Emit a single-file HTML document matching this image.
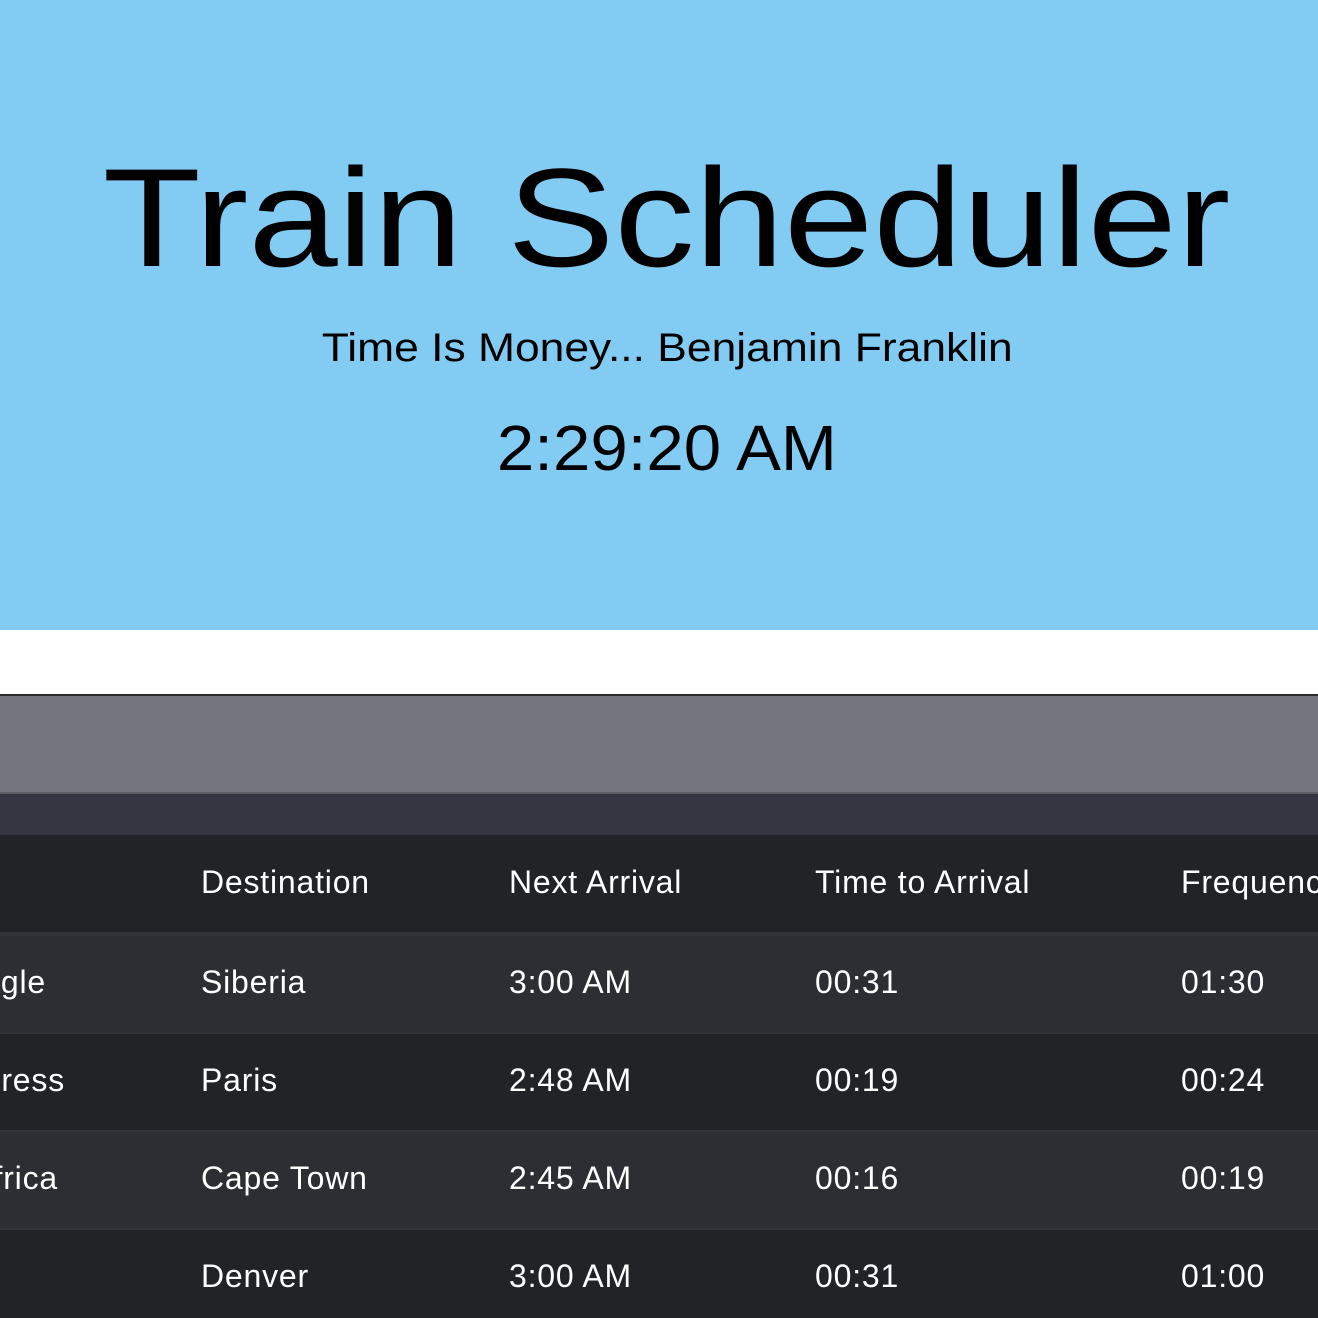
<!DOCTYPE html>
<html><head><style>
body{margin:0;width:1318px;height:1318px;overflow:hidden;background:#fff;font-family:"Liberation Sans","DejaVu Sans",sans-serif;}
.hero{position:absolute;left:0;top:0;width:1318px;height:630px;background:#82cbf2;}
.t{position:absolute;white-space:nowrap;color:#000;}
.title{left:0;width:1334px;top:138px;text-align:center;font-size:140px;line-height:160px;}
.title span{display:inline-block;transform:scaleX(1.147);}
.sub{left:0;width:1334px;top:325px;text-align:center;font-size:40px;line-height:46px;}
.sub span{display:inline-block;transform:scaleX(1.11);}
.clock{left:0;width:1334px;top:412px;text-align:center;font-size:64px;line-height:72px;}
.clock span{display:inline-block;transform:scaleX(1.05);}
.bar{position:absolute;left:0;width:1318px;}
.cell{position:absolute;color:#fff;font-size:32px;white-space:nowrap;letter-spacing:0.8px;}
</style></head><body>
<div class="hero"></div>
<div class="t title"><span>Train Scheduler</span></div>
<div class="t sub"><span>Time Is Money... Benjamin Franklin</span></div>
<div class="t clock"><span>2:29:20 AM</span></div>
<div class="bar" style="top:694px;height:2px;background:#2a2c31"></div>
<div class="bar" style="top:696px;height:96px;background:#74767f"></div>
<div class="bar" style="top:792px;height:2px;background:#5d5f67"></div>
<div class="bar" style="top:794px;height:41px;background:#343741"></div>
<div class="bar" style="top:835px;height:97px;background:#212327"></div>
<div class="bar" style="top:932px;height:4px;background:#32343a"></div>
<div class="bar" style="top:936px;height:96px;background:#2c2e33"></div>
<div class="bar" style="top:1032px;height:2px;background:#32343a"></div>
<div class="bar" style="top:1034px;height:96px;background:#212327"></div>
<div class="bar" style="top:1130px;height:2px;background:#32343a"></div>
<div class="bar" style="top:1132px;height:96px;background:#2c2e33"></div>
<div class="bar" style="top:1228px;height:2px;background:#32343a"></div>
<div class="bar" style="top:1230px;height:88px;background:#212327"></div>

<div class="cell" style="left:201px;top:864px">Destination</div>
<div class="cell" style="left:509px;top:864px">Next Arrival</div>
<div class="cell" style="left:815px;top:864px">Time to Arrival</div>
<div class="cell" style="left:1181px;top:864px">Frequency</div>

<div class="cell" style="right:1272px;top:964px">Beagle</div>
<div class="cell" style="left:201px;top:964px">Siberia</div>
<div class="cell" style="left:509px;top:964px">3:00 AM</div>
<div class="cell" style="left:815px;top:964px">00:31</div>
<div class="cell" style="left:1181px;top:964px">01:30</div>

<div class="cell" style="right:1253px;top:1062px">Express</div>
<div class="cell" style="left:201px;top:1062px">Paris</div>
<div class="cell" style="left:509px;top:1062px">2:48 AM</div>
<div class="cell" style="left:815px;top:1062px">00:19</div>
<div class="cell" style="left:1181px;top:1062px">00:24</div>

<div class="cell" style="right:1260px;top:1160px">Africa</div>
<div class="cell" style="left:201px;top:1160px">Cape Town</div>
<div class="cell" style="left:509px;top:1160px">2:45 AM</div>
<div class="cell" style="left:815px;top:1160px">00:16</div>
<div class="cell" style="left:1181px;top:1160px">00:19</div>

<div class="cell" style="left:201px;top:1258px">Denver</div>
<div class="cell" style="left:509px;top:1258px">3:00 AM</div>
<div class="cell" style="left:815px;top:1258px">00:31</div>
<div class="cell" style="left:1181px;top:1258px">01:00</div>
</body></html>
